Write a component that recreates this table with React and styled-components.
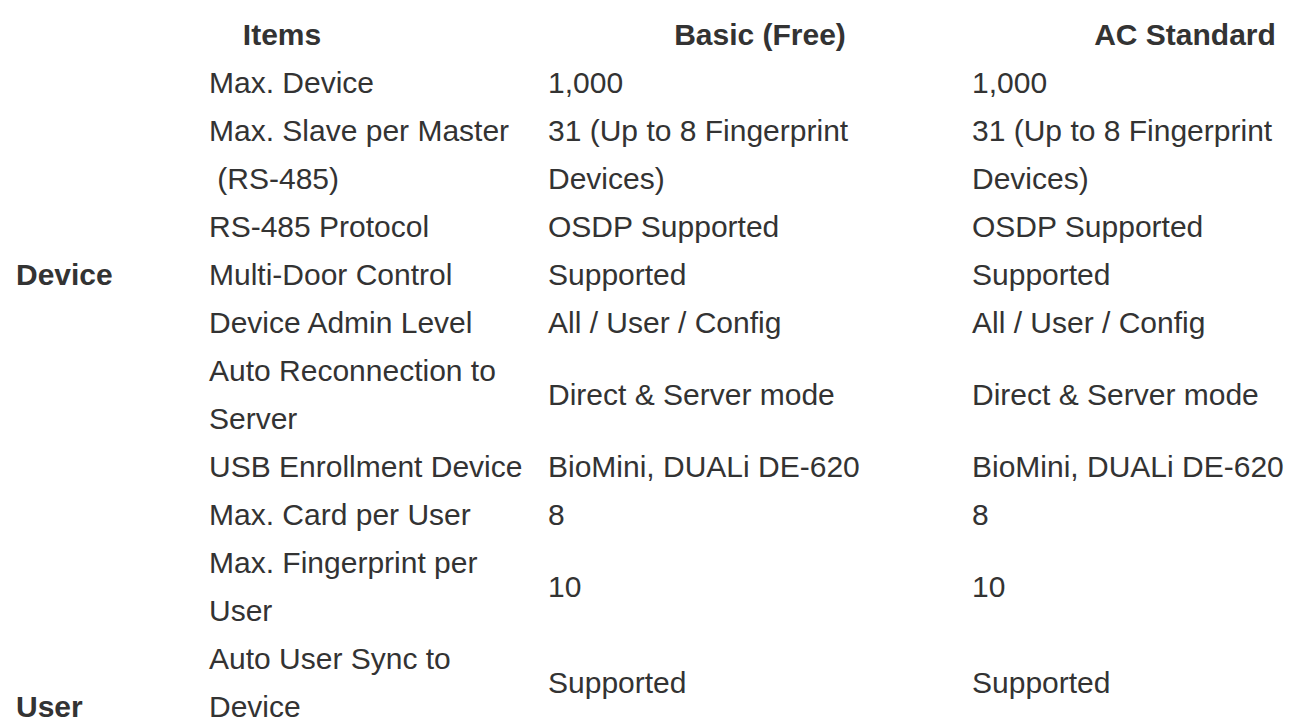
import React from 'react';
import styled, { createGlobalStyle } from 'styled-components';

const GlobalStyle = createGlobalStyle`
  html, body {
    margin: 0;
    padding: 0;
    background: #fff;
    overflow: hidden;
  }
  body {
    font-family: "Liberation Sans", Arial, sans-serif;
    color: #333;
  }
`;

const Page = styled.div`
  padding: 11px 0 0 16px;
`;

const Table = styled.table`
  border-collapse: collapse;
  border-spacing: 0;
  table-layout: fixed;
  width: 1382px;
  font-size: 30px;
  line-height: 48px;
  color: #333;
`;

const Col = styled.col`
  width: ${({ w }) => w}px;
`;

const Head = styled.th`
  padding: 0;
  font-weight: bold;
  text-align: center;
  vertical-align: middle;
`;

const Group = styled.td`
  padding: 0;
  font-weight: bold;
  vertical-align: middle;
  text-align: left;
`;

const Cell = styled.td`
  padding: 0;
  vertical-align: middle;
  text-align: left;
`;

const sections = [
  {
    name: 'Device',
    rows: [
      [['Max. Device'], ['1,000'], ['1,000']],
      [['Max. Slave per Master', '\u00a0(RS-485)'], ['31 (Up to 8 Fingerprint', 'Devices)'], ['31 (Up to 8 Fingerprint', 'Devices)']],
      [['RS-485 Protocol'], ['OSDP Supported'], ['OSDP Supported']],
      [['Multi-Door Control'], ['Supported'], ['Supported']],
      [['Device Admin Level'], ['All / User / Config'], ['All / User / Config']],
      [['Auto Reconnection to', 'Server'], ['Direct & Server mode'], ['Direct & Server mode']],
      [['USB Enrollment Device'], ['BioMini, DUALi DE-620'], ['BioMini, DUALi DE-620']],
    ],
  },
  {
    name: 'User',
    rows: [
      [['Max. Card per User'], ['8'], ['8']],
      [['Max. Fingerprint per', 'User'], ['10'], ['10']],
      [['Auto User Sync to', 'Device'], ['Supported'], ['Supported']],
      [['Max. Face per User'], ['5'], ['5']],
      [['Custom User Field'], ['Supported'], ['Supported']],
      [['User Group'], ['Supported'], ['Supported']],
      [['Visual Face Enrollment'], ['Supported'], ['Supported']],
    ],
  },
];

const Lines = ({ lines }) =>
  lines.map((l, i) => (
    <React.Fragment key={i}>
      {i > 0 && <br />}
      {l}
    </React.Fragment>
  ));

const App = () => {
  return (
    <>
      <GlobalStyle />
      <Page>
        <Table>
          <colgroup>
            <Col w={193} />
            <Col w={339} />
            <Col w={424} />
            <Col w={426} />
          </colgroup>
          <thead>
            <tr>
              <Head colSpan={2}>Items</Head>
              <Head>Basic (Free)</Head>
              <Head>AC Standard</Head>
            </tr>
          </thead>
          <tbody>
            {sections.map((sec) =>
              sec.rows.map((row, ri) => (
                <tr key={sec.name + ri}>
                  {ri === 0 && <Group rowSpan={sec.rows.length}>{sec.name}</Group>}
                  {row.map((cell, ci) => (
                    <Cell key={ci}>
                      <Lines lines={cell} />
                    </Cell>
                  ))}
                </tr>
              ))
            )}
          </tbody>
        </Table>
      </Page>
    </>
  );
};

export default App;
